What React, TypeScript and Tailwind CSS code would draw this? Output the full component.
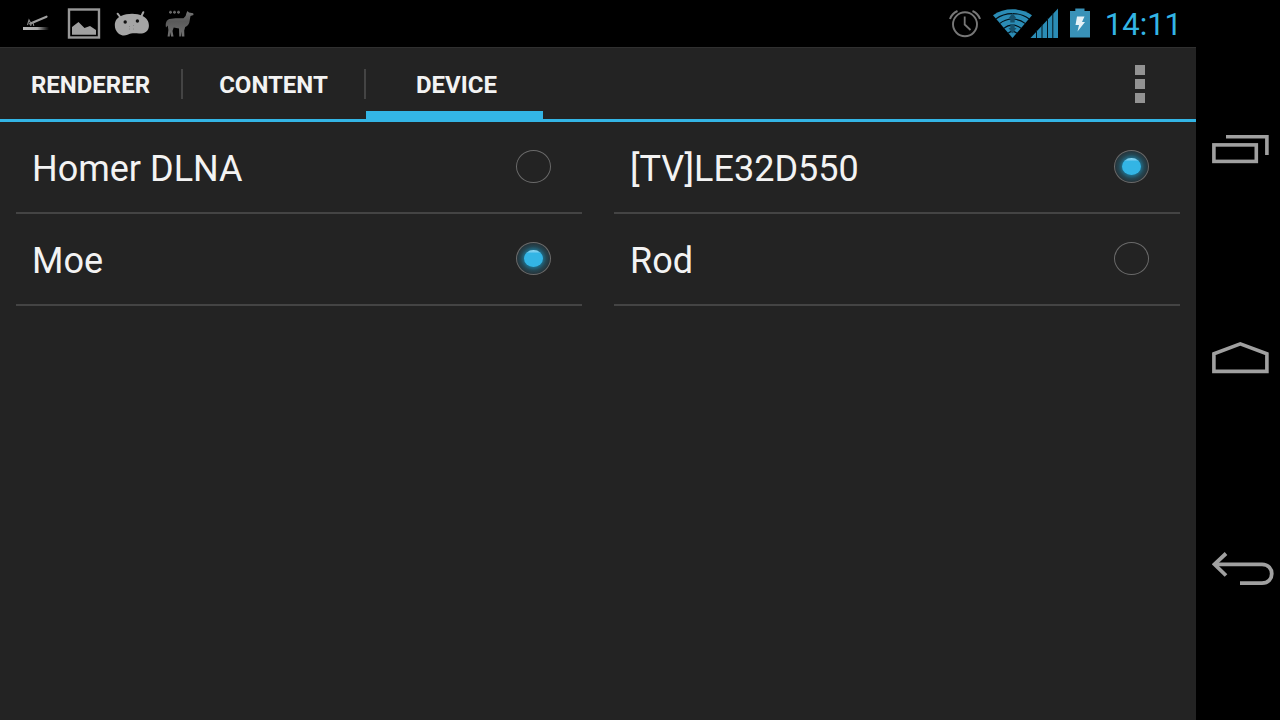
import { useState } from "react";

const tabs = ["RENDERER", "CONTENT", "DEVICE"];

const groups = [
  { name: "renderer-device", label: "Content servers", items: ["Homer DLNA", "Moe"], initial: "Moe" },
  { name: "output-device", label: "Renderers", items: ["[TV]LE32D550", "Rod"], initial: "[TV]LE32D550" },
];

function AirplaneIcon() {
  return (
    <svg width="28" height="32" viewBox="22 8 28 32" aria-hidden="true">
      <defs>
        <linearGradient id="runway" x1="0" x2="1" y1="0" y2="0">
          <stop offset="0" stopColor="#b8b8b8" />
          <stop offset="0.55" stopColor="#a8a8a8" />
          <stop offset="1" stopColor="#a0a0a0" stopOpacity="0" />
        </linearGradient>
      </defs>
      <rect x="23" y="27" width="26" height="3" fill="url(#runway)" />
      <path d="M30.500 23.500L46.500 16.700" stroke="#a0a0a0" strokeWidth="2.200" strokeLinecap="round" />
      <path d="M27.500 25L29 20L31.500 24.500M29 24L33 22.500L33.800 26M30.800 24V26" stroke="#8a8a8a" strokeWidth="1.100" fill="none" />
    </svg>
  );
}

function PictureIcon() {
  return (
    <svg width="34" height="32" viewBox="67 8 34 32" aria-hidden="true">
      <rect x="69" y="9.500" width="30" height="28" fill="none" stroke="#989898" strokeWidth="2.400" />
      <path d="M72 34.700V27L78.500 22L84.500 28L90 26L96 30V34.700Z" fill="#a0a0a0" />
    </svg>
  );
}

function RobotIcon() {
  return (
    <svg width="36" height="32" viewBox="114 8 36 32" aria-hidden="true">
      <path d="M117.600 13.700L121 18M143.300 12.200L141 17" stroke="#a5a5a5" strokeWidth="2" strokeLinecap="round" />
      <path
        d="M121 16C127 13 137 12.800 142.500 16C147.500 18 149.600 23 148.700 27.500C147.800 32 143.500 34 139 33.500C134.500 33 131 33 127.500 34.800C122.500 36.800 117.800 34.500 115.600 29.500C113.800 24.500 115 18.500 121 16Z"
        fill="#a5a5a5"
      />
      <circle cx="125.200" cy="22" r="1.700" fill="#111" />
      <circle cx="137.400" cy="21" r="1.700" fill="#111" />
      <path d="M129 26.500h1M133 25.500h1M129 29h1M133 29h1" stroke="#888" />
    </svg>
  );
}

function LlamaIcon() {
  return (
    <svg width="30" height="32" viewBox="165 8 30 32" aria-hidden="true">
      <defs>
        <linearGradient id="llama" x1="0" x2="0" y1="0" y2="1">
          <stop offset="0" stopColor="#777" />
          <stop offset="0.400" stopColor="#5a5a5a" />
          <stop offset="1" stopColor="#707070" />
        </linearGradient>
      </defs>
      <path
        d="M187.500 11L189 12.500L193.200 13.200L193.500 15L190.500 16L189.300 22.500C188.600 25 187.300 26 185.200 27L184.200 30.500L184.400 36.500H181.800L181.300 31.500L180.800 36.500H179.300L179 28.500L173.700 27.500L172.500 31L173.500 36.500H171.100L170 32L169.800 36.500H167.600L168.400 30L167.700 25.500L166 27.500C165.200 23.500 166.200 19.800 169.500 18.900L175.500 18.300L183.500 18.200L185.600 16L186.500 13Z"
        fill="url(#llama)"
      />
      <path d="M169 12.300h3M173 12.300h3M177 12.300h3M170.500 10.800v3M174.500 10.800v3M178.500 10.800v3" stroke="#666" strokeWidth="1.600" />
    </svg>
  );
}

function AlarmIcon() {
  return (
    <svg width="34" height="32" viewBox="948 8 34 32" fill="none" stroke="#777" aria-hidden="true">
      <circle cx="965" cy="24.300" r="12" strokeWidth="1.900" />
      <path d="M964.700 16.500V24.500L970.500 30" strokeWidth="1.800" />
      <path d="M950 19C951.300 15.300 954 12.500 957.500 11M972.500 11C976 12.500 978.700 15.300 980 19" strokeWidth="2" />
    </svg>
  );
}

function WifiIcon() {
  return (
    <svg width="40" height="32" viewBox="992 8 40 32" aria-hidden="true">
      <path d="M993 15.200C1004 7.300 1021 7.300 1032 15.200L1012.500 38Z" fill="#2b8cb5" />
      <g fill="none" stroke="#020f16" strokeWidth="1.100">
        <path d="M995.800 19C1005 11.800 1020 11.800 1029.200 19" />
        <path d="M999.500 23.700C1007 17.500 1018 17.500 1025.500 23.700" />
        <path d="M1003.700 28.400C1009 24 1016 24 1021.300 28.400" />
        <path d="M1008 33.200C1010.800 31 1014.200 31 1017 33.200" />
      </g>
      <path d="M1012.500 13L1016.500 18.500H1014.700V22.500H1010.300V18.500H1008.500ZM1012.500 33.500L1016.500 28H1014.700V24H1010.300V28H1008.500Z" fill="#17526d" />
    </svg>
  );
}

function SignalIcon() {
  return (
    <svg width="28" height="32" viewBox="1030 8 28 32" aria-hidden="true">
      <path d="M1030.500 38L1058 8.500V38Z" fill="#2b8cb5" />
      <path d="M1036.500 30V38M1042 24V38M1047.500 18V38M1052.800 13V38" stroke="#02141d" strokeWidth="1" />
    </svg>
  );
}

function BatteryIcon() {
  return (
    <svg width="22" height="32" viewBox="1069 8 22 32" aria-hidden="true">
      <path d="M1070 11H1075.300V8.500H1084.500V11H1090V37.500H1070Z" fill="#3992b8" />
      <path d="M1077 16.500H1084.500L1082 22H1085L1077.500 31.500L1079 25H1075.500Z" fill="#e6f2f7" />
    </svg>
  );
}

function StatusBar() {
  return (
    <header className="flex h-[47px] items-center justify-between bg-black pl-[22px] pr-[14px]">
      <div className="flex items-center">
        <AirplaneIcon />
        <span className="ml-[17px]"><PictureIcon /></span>
        <span className="ml-[13px]"><RobotIcon /></span>
        <span className="ml-[15px]"><LlamaIcon /></span>
      </div>
      <div className="flex items-center">
        <AlarmIcon />
        <span className="ml-[10px] flex">
          <WifiIcon />
          <span className="-ml-[2px]"><SignalIcon /></span>
        </span>
        <span className="ml-[11px]"><BatteryIcon /></span>
        <time className="ml-[14px] pt-[2px] text-[31px] leading-8 text-[#33b5e5]">14:11</time>
      </div>
    </header>
  );
}

function ActionBar() {
  const [active, setActive] = useState("DEVICE");
  return (
    <nav className="flex h-[75px] items-stretch justify-between border-b-3 border-t border-b-[#33b5e5] border-t-[#303030]">
      <div role="tablist" className="flex">
        {tabs.map((tab, i) => (
          <div key={tab} className="flex items-stretch">
            {i > 0 && <span className="mt-[21px] h-[30px] w-[2px] bg-[#444]" />}
            <button
              role="tab"
              aria-selected={active === tab}
              onClick={() => setActive(tab)}
              className="flex w-[181px] flex-col justify-between pt-[21px] text-2xl leading-8 font-bold text-[#f3f3f3]"
            >
              <span className="w-full text-center">{tab}</span>
              <span className={active === tab ? "h-2 w-[177px] bg-[#33b5e5]" : "h-2 w-[177px]"} />
            </button>
          </div>
        ))}
      </div>
      <button aria-label="More options" className="flex w-28 flex-col items-center justify-center gap-1">
        <span className="size-[10px] bg-[#929292]" />
        <span className="size-[10px] bg-[#929292]" />
        <span className="size-[10px] bg-[#929292]" />
      </button>
    </nav>
  );
}

function DeviceGroup({ name, label, items, initial }: (typeof groups)[number]) {
  const [selected, setSelected] = useState(initial);
  return (
    <div role="radiogroup" aria-label={label} className="flex flex-col">
      {items.map((item) => (
        <label key={item} className="flex h-[92px] items-center justify-between border-b-2 border-[#444] pb-[2px] pl-4 pr-[30px] text-4xl leading-10 text-[#f3f3f3]">
          <span className="pt-[6px]">{item}</span>
          <input
            type="radio"
            name={name}
            checked={selected === item}
            onChange={() => setSelected(item)}
            className="grid h-[33px] w-[35px] mr-px appearance-none place-items-center rounded-[50%] border border-[#6a6a6a] checked:bg-[radial-gradient(closest-side,#1f7594_50%,#244652_78%,#26343a_100%)] checked:before:h-[17px] checked:before:w-[19px] checked:before:rounded-[50%] checked:before:bg-linear-to-b checked:before:from-[#8ad6f2] checked:before:from-5% checked:before:to-[#33b5e5] checked:before:to-20% checked:before:content-['']"
          />
        </label>
      ))}
    </div>
  );
}

function NavigationBar() {
  return (
    <nav aria-label="System" className="flex w-[84px] shrink-0 flex-col bg-black pt-11 pb-[46px]">
      <button aria-label="Recent apps" className="flex flex-1 items-center justify-end pr-1">
        <svg width="64" height="40" viewBox="1212 129 64 40" fill="none" stroke="#a0a0a0" strokeWidth="3.600">
          <rect x="1213.900" y="144.900" width="42.400" height="16.500" />
          <path d="M1226 136.700H1266.900V155" />
        </svg>
      </button>
      <button aria-label="Home" className="flex flex-1 items-center justify-end pr-1">
        <svg width="64" height="40" viewBox="1212 339 64 40" fill="none" stroke="#a0a0a0" strokeWidth="3.600">
          <path d="M1213.900 371.400V353.800L1240.300 343.800L1266.900 353.800V371.400Z" />
        </svg>
      </button>
      <button aria-label="Back" className="flex flex-1 items-center justify-end pr-1">
        <svg width="64" height="40" viewBox="1212 549 64 40" fill="none" stroke="#a0a0a0" strokeWidth="3.800">
          <path d="M1216 564.300H1262C1275 564.300 1275 583.200 1262 583.200H1240" />
          <path d="M1226 553.500L1214.500 564.300L1226 575.500" />
        </svg>
      </button>
    </nav>
  );
}

export default function App() {
  return (
    <div className="flex min-h-screen bg-[#232323] font-[Roboto,sans-serif]">
      <div className="flex min-w-0 flex-1 flex-col">
        <StatusBar />
        <ActionBar />
        <main className="grid grid-cols-2 gap-8 px-4">
          {groups.map((group) => (
            <DeviceGroup key={group.name} {...group} />
          ))}
        </main>
      </div>
      <NavigationBar />
    </div>
  );
}
